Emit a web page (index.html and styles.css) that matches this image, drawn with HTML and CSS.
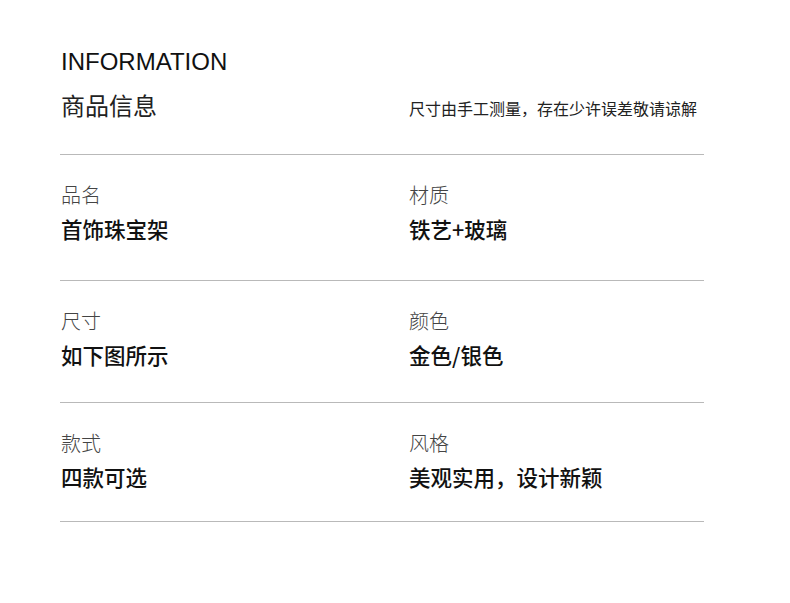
FILE: index.html
```html
<!DOCTYPE html>
<html lang="zh-CN">
<head>
<meta charset="utf-8">
<title>INFORMATION</title>
<link rel="stylesheet" href="styles.css">
</head>
<body>
<div class="sheet">
  <header class="head">
    <h1 class="title">INFORMATION</h1>
    <div class="sub-row">
      <h2 class="subtitle">商品信息</h2>
      <p class="note">尺寸由手工测量，存在少许误差敬请谅解</p>
    </div>
  </header>
  <section class="row row-1">
    <div class="cell"><div class="label">品名</div><div class="value">首饰珠宝架</div></div>
    <div class="cell"><div class="label">材质</div><div class="value">铁艺+玻璃</div></div>
  </section>
  <section class="row row-2">
    <div class="cell"><div class="label">尺寸</div><div class="value">如下图所示</div></div>
    <div class="cell"><div class="label">颜色</div><div class="value">金色/银色</div></div>
  </section>
  <section class="row row-3">
    <div class="cell"><div class="label">款式</div><div class="value">四款可选</div></div>
    <div class="cell"><div class="label">风格</div><div class="value">美观实用，设计新颖</div></div>
  </section>
</div>
</body>
</html>
```

FILE: styles.css
```css
html, body {
  margin: 0;
  padding: 0;
  background: #ffffff;
}

body {
  font-family: "Noto Sans CJK SC", "Noto Sans", sans-serif;
  color: #111;
}

.sheet {
  width: 644px;
  margin-left: 60px;
  padding-top: 48px;
  border-bottom: 1px solid #b9b9b9;
}

.head {
  padding-left: 1px;
  padding-bottom: 33px;
  border-bottom: 1px solid #b9b9b9;
}

.title {
  margin: 0;
  font-family: "Liberation Sans", Arial, sans-serif;
  font-weight: 400;
  font-size: 24px;
  line-height: 28px;
  color: #111;
}

.sub-row {
  display: grid;
  grid-template-columns: 348px 1fr;
  align-items: end;
  margin-top: 13px;
}

.subtitle {
  margin: 0;
  font-weight: 400;
  font-size: 24px;
  line-height: 32px;
  color: #222;
}

.note {
  margin: 0 0 2px 0;
  font-size: 16px;
  line-height: 22px;
  font-weight: 400;
  color: #222;
}

.row {
  display: grid;
  grid-template-columns: 348px 1fr;
  padding-left: 1px;
  border-bottom: 1px solid #b9b9b9;
}

.row:last-child {
  border-bottom: none;
}

.row-1 { padding-top: 26px; padding-bottom: 36px; }
.row-2 { padding-top: 26px; padding-bottom: 32px; }
.row-3 { padding-top: 26px; padding-bottom: 29px; }

.cell {
  display: flex;
  flex-direction: column;
  gap: 5px;
}

.label {
  font-size: 20px;
  line-height: 28px;
  font-weight: 300;
  color: #444;
}

.value {
  font-size: 21.5px;
  line-height: 30px;
  font-weight: 500;
  color: #111;
}
```
